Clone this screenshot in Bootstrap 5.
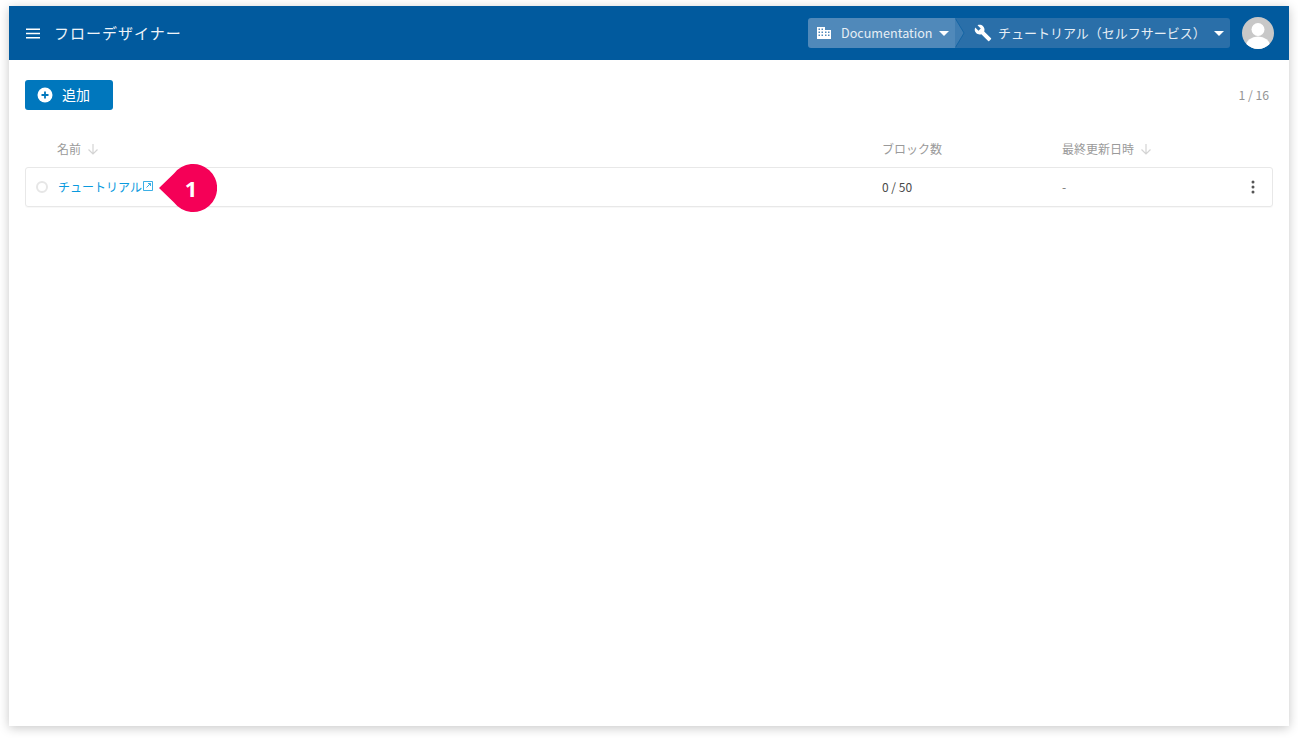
<!DOCTYPE html>
<html lang="ja">
<head>
<meta charset="utf-8">
<title>フローデザイナー</title>
<link href="https://cdn.jsdelivr.net/npm/bootstrap@5.3.0/dist/css/bootstrap.min.css" rel="stylesheet">
<style>
html,body{height:100%;background:#fff;overflow:hidden}
body{font-family:"Noto Sans CJK JP",sans-serif;padding:6px 9px 12px}
.app-frame{width:1280px;height:720px;background:#fff;box-shadow:0 2px 10px rgba(0,0,0,.22)}
.top-bar{height:54px;background:#015a9e;padding:0 15px 0 17px;color:#fff}
.menu-ico{width:14px;height:11px;flex:none}
.app-title{font-size:15px;margin-left:14px;letter-spacing:.068em;color:#eef4f9;padding-top:1px}
.crumbs{height:30px;font-size:13px;margin-right:12px;color:#e6eef5}
.crumb-a{position:relative;height:30px;width:148px;background:#5089ba;border-radius:3px 0 0 3px;padding-left:9px}
.crumb-a svg.tip{position:absolute;left:100%;top:0;margin-left:-1px}
.crumb-b{height:30px;width:274px;background:#2a6fa9;border-radius:0 3px 3px 0;padding-left:18px}
.crumb-a .lbl{margin-left:10px;margin-right:6px;white-space:nowrap;font-size:12.6px}
.crumb-b .lbl{margin-left:6px;width:216px;white-space:nowrap}
.caret-d{width:0;height:0;border-left:5px solid transparent;border-right:5px solid transparent;border-top:5px solid #fff;flex:none}
.avatar-c{width:32px;height:32px;border-radius:50%;overflow:hidden;background:#c8c8c8}
.add-btn{width:88px;height:30px;background:#0077bd;color:#fff;border:0;border-radius:3px;font-size:14px;padding:0 0 2px 12px;--bs-btn-hover-bg:#0077bd;--bs-btn-hover-color:#fff}
.add-btn svg{margin-top:2px}
.add-btn span{margin-left:9px}
.tool-row{padding:20px 20px 0 16px}
.count-t{font-size:12.2px;color:#949494}
.head-row{padding:0 16px;margin-top:28px;height:22px;font-size:12px;color:#9a9a9a}
.col-name{width:857px;padding-left:32px}
.col-blocks{width:180px}
.sort-ar{margin-left:6px;width:12px;height:12px}
.data-row{position:relative;margin:7px 16px 0;height:40px;border:1px solid #e8e8e8;border-radius:3px;font-size:12px;color:#4a4a4a;box-shadow:0 1px 1px rgba(0,0,0,.03)}
.dot-o{width:12px;height:12px;border:2.5px solid #e6e6e6;border-radius:50%;margin:0 10px 0 10px;flex:none}
.row-name{width:824px}
.row-name a{color:#0a9ade;text-decoration:none}
.ext-ico{width:10px;height:10px;margin:-5px 0 0 1px;vertical-align:middle}
.row-block{width:180px}
.row-date{color:#777}
.pin{position:absolute;left:131px;top:-4px;width:60px;height:48px}
.pin-n{position:absolute;left:131px;top:-4px;width:60px;height:48px;text-align:center;padding-left:8px;color:#fff;font:700 22px/48px "Noto Sans",sans-serif}
.more-ico{position:absolute;right:17px;top:12px;width:4px;height:14px}
</style>
</head>
<body>
<div class="app-frame d-flex flex-column">
  <header class="top-bar d-flex align-items-center">
    <svg class="menu-ico" viewBox="0 0 14 11" fill="#fff"><rect y="0.5" width="14" height="1.5"/><rect y="4.750" width="14" height="1.500"/><rect y="9" width="14" height="1.500"/></svg>
    <div class="app-title flex-grow-1">フローデザイナー</div>
    <div class="crumbs d-flex align-items-center">
      <div class="crumb-a d-flex align-items-center">
        <svg width="14" height="12" viewBox="0 0 14 12" fill="#fff"><path d="M0 0h8v3h6v9H0zM1.5 1.5v1.5h1.5V1.5zM4.500 1.500v1.500H6V1.500zM1.500 4.500V6h1.500V4.500zM4.500 4.500V6H6V4.500zM1.500 7.500V9h1.500V7.500zM4.500 7.500V9H6V7.500zM8 4.500V6h1.500V4.500zM11 4.500V6h1.500V4.500zM8 7.500V9h1.500V7.500zM11 7.500V9h1.500V7.500z" fill-rule="evenodd"/></svg>
        <span class="lbl">Documentation</span>
        <span class="caret-d"></span>
        <svg class="tip" width="10" height="30" viewBox="0 0 10 30"><path d="M0 0L9 15L0 30Z" fill="#3f7db2"/><path d="M0 0L9 15L0 30" fill="none" stroke="#015a9e" stroke-width=".6"/></svg>
      </div>
      <div class="crumb-b d-flex align-items-center">
        <svg width="18" height="18" viewBox="0 0 24 24" fill="#fff"><path d="M22.700 19l-9.100-9.100c.9-2.300.4-5-1.500-6.900-2-2-5-2.400-7.400-1.300L9 6 6 9 1.600 4.700C.4 7.100.9 10.100 2.900 12.100c1.900 1.900 4.600 2.400 6.900 1.500l9.100 9.100c.4.400 1 .4 1.400 0l2.300-2.300c.5-.4.500-1.100.1-1.400z"/></svg>
        <span class="lbl">チュートリアル（セルフサービス）</span>
        <span class="caret-d"></span>
      </div>
    </div>
    <div class="avatar-c">
      <svg width="32" height="32" viewBox="0 0 32 32"><circle cx="16" cy="12.500" r="6.500" fill="#fff"/><ellipse cx="16" cy="29" rx="12" ry="9.500" fill="#fff"/></svg>
    </div>
  </header>
  <main class="flex-grow-1">
    <div class="tool-row d-flex justify-content-between align-items-center">
      <button type="button" class="btn add-btn d-flex align-items-center">
        <svg width="16" height="16" viewBox="0 0 16 16"><circle cx="8" cy="8" r="7.500" fill="#fff"/><path d="M4.500 8h7M8 4.500v7" stroke="#0077bd" stroke-width="1.800"/></svg>
        <span>追加</span>
      </button>
      <div class="count-t">1 / 16</div>
    </div>
    <div class="head-row d-flex align-items-center">
      <div class="col-name d-flex align-items-center">名前<svg class="sort-ar" viewBox="0 0 12 12" fill="none" stroke="#d4d4d4" stroke-width="1.200"><path d="M6 1v10M1.500 6.500L6 11l4.500-4.500"/></svg></div>
      <div class="col-blocks">ブロック数</div>
      <div class="d-flex align-items-center">最終更新日時<svg class="sort-ar" viewBox="0 0 12 12" fill="none" stroke="#d4d4d4" stroke-width="1.200"><path d="M6 1v10M1.500 6.500L6 11l4.500-4.500"/></svg></div>
    </div>
    <div class="data-row d-flex align-items-center">
      <span class="dot-o"></span>
      <div class="row-name"><a href="#">チュートリアル<svg class="ext-ico" viewBox="0 0 10 10" fill="none" stroke="#0a9ade" stroke-width=".8"><path d="M.5.5h9v9h-9zM3.500 6.500L7.500 2.500M5 2.500h2.500V5"/></svg></a></div>
      <div class="row-block">0 / 50</div>
      <div class="row-date">-</div>
      <svg class="more-ico" viewBox="0 0 4 14" fill="#555"><circle cx="2" cy="2" r="1.500"/><circle cx="2" cy="7" r="1.500"/><circle cx="2" cy="12" r="1.500"/></svg>
      <svg class="pin" viewBox="0 0 60 48"><path d="M2 24L17 9.500A24 24 0 1 1 17 38.500Z" fill="#f50057"/></svg>
      <div class="pin-n">1</div>
    </div>
  </main>
</div>
<script src="https://cdn.jsdelivr.net/npm/bootstrap@5.3.0/dist/js/bootstrap.bundle.min.js"></script>
</body>
</html>
